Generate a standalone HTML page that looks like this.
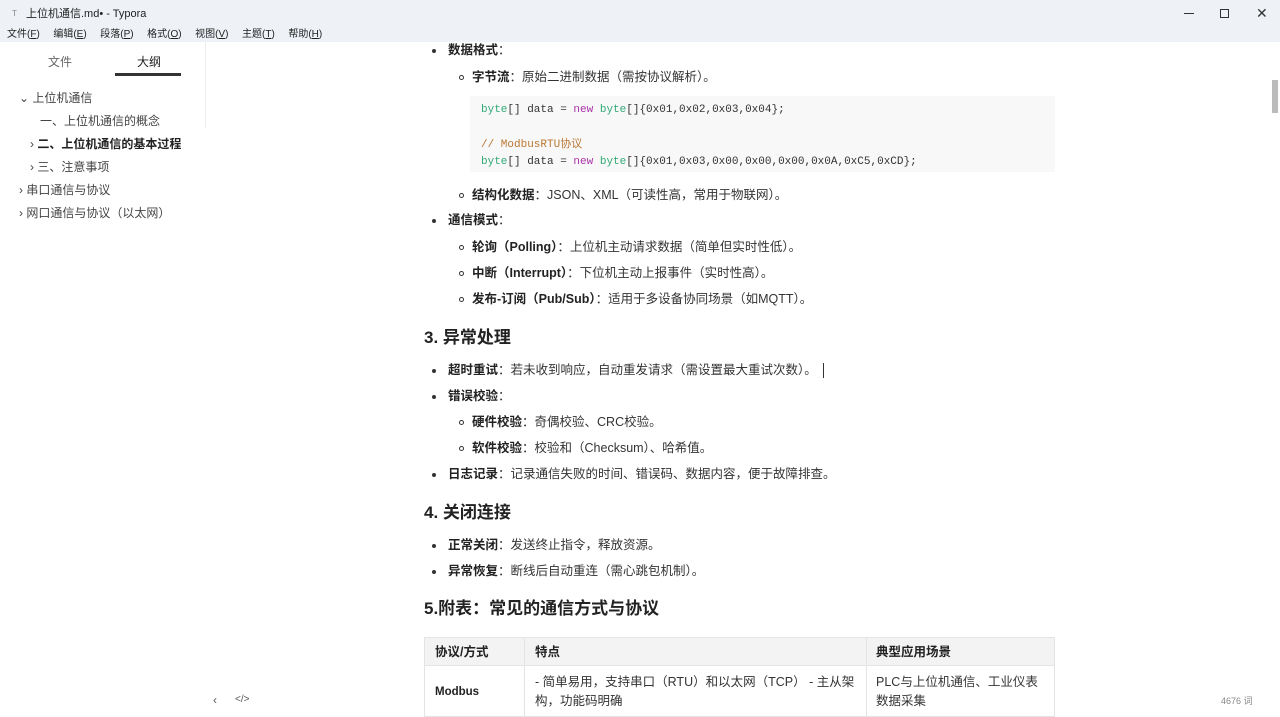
<!DOCTYPE html>
<html><head><meta charset="utf-8"><style>
*{margin:0;padding:0;box-sizing:border-box}
body{width:1280px;height:716px;overflow:hidden;background:#fff;font-family:"Liberation Sans","Noto Sans CJK SC",sans-serif;color:#333;font-size:12.5px;position:relative}
.a{position:absolute;white-space:nowrap;line-height:18px}
b{font-weight:bold;color:#222}
.mono{font-family:"Liberation Mono","Noto Sans CJK SC",monospace;font-size:11px}
.dot{position:absolute;width:4px;height:4px;border-radius:50%;background:#333}
.circ{position:absolute;width:5px;height:5px;border-radius:50%;border:1px solid #333}
h3{position:absolute;font-size:17px;font-weight:bold;color:#222;white-space:nowrap;line-height:22px}
.side{font-size:12px;color:#444}
</style></head><body>
<div style="position:absolute;left:0;top:0;width:1280px;height:42px;background:#eef2f7"></div>
<div class="a" style="left:12px;top:5px;font-size:8px;color:#888">T</div>
<div class="a" style="left:26px;top:5px;font-size:11px;color:#222">上位机通信.md• - Typora</div>
<div class="a" style="left:7px;top:26px;font-size:10px;color:#222;word-spacing:4px">文件(<u>F</u>) &nbsp;编辑(<u>E</u>) &nbsp;段落(<u>P</u>) &nbsp;格式(<u>O</u>) &nbsp;视图(<u>V</u>) &nbsp;主题(<u>T</u>) &nbsp;帮助(<u>H</u>)</div>
<div style="position:absolute;left:1184px;top:13px;width:10px;height:1px;background:#333"></div>
<div style="position:absolute;left:1220px;top:9px;width:9px;height:9px;border:1px solid #333"></div>
<div class="a" style="left:1256px;top:4px;font-size:14px;color:#333">✕</div>

<div style="position:absolute;left:205px;top:42px;width:1px;height:86px;background:#eee"></div>
<div class="a side" style="left:48px;top:53px;color:#666">文件</div>
<div class="a side" style="left:137px;top:53px;color:#222">大纲</div>
<div style="position:absolute;left:115px;top:73px;width:66px;height:3px;background:#333"></div>
<div class="a side" style="left:19px;top:89px">⌄ 上位机通信</div>
<div class="a side" style="left:40px;top:112px">一、上位机通信的概念</div>
<div class="a side" style="left:30px;top:135px">› <b>二、上位机通信的基本过程</b></div>
<div class="a side" style="left:30px;top:158px">› 三、注意事项</div>
<div class="a side" style="left:19px;top:181px">› 串口通信与协议</div>
<div class="a side" style="left:19px;top:204px">› 网口通信与协议（以太网）</div>

<div style="position:absolute;left:1272px;top:80px;width:6px;height:33px;background:#bbb"></div>

<div class="dot" style="left:432px;top:49px"></div><div class="a" style="left:448px;top:41px"><b>数据格式</b>：</div>
<div class="circ" style="left:459px;top:75px"></div><div class="a" style="left:472px;top:68px"><b>字节流</b>：原始二进制数据（需按协议解析）。</div>
<div style="position:absolute;left:470px;top:96px;width:585px;height:76px;background:#f8f8f8"></div>
<div class="a mono" style="left:481px;top:101px"><span style="color:#3a7">byte</span>[] data = <span style="color:#a3a">new</span> <span style="color:#3a7">byte</span>[]{0x01,0x02,0x03,0x04};</div>
<div class="a mono" style="left:481px;top:136px;color:#b73">// ModbusRTU协议</div>
<div class="a mono" style="left:481px;top:153px"><span style="color:#3a7">byte</span>[] data = <span style="color:#a3a">new</span> <span style="color:#3a7">byte</span>[]{0x01,0x03,0x00,0x00,0x00,0x0A,0xC5,0xCD};</div>
<div class="circ" style="left:459px;top:193px"></div><div class="a" style="left:472px;top:186px"><b>结构化数据</b>：JSON、XML（可读性高，常用于物联网）。</div>
<div class="dot" style="left:432px;top:219px"></div><div class="a" style="left:448px;top:211px"><b>通信模式</b>：</div>
<div class="circ" style="left:459px;top:245px"></div><div class="a" style="left:472px;top:238px"><b>轮询（Polling）</b>：上位机主动请求数据（简单但实时性低）。</div>
<div class="circ" style="left:459px;top:271px"></div><div class="a" style="left:472px;top:264px"><b>中断（Interrupt）</b>：下位机主动上报事件（实时性高）。</div>
<div class="circ" style="left:459px;top:297px"></div><div class="a" style="left:472px;top:290px"><b>发布-订阅（Pub/Sub）</b>：适用于多设备协同场景（如MQTT）。</div>
<h3 style="left:424px;top:327px">3. 异常处理</h3>
<div class="dot" style="left:432px;top:369px"></div><div class="a" style="left:448px;top:361px"><b>超时重试</b>：若未收到响应，自动重发请求（需设置最大重试次数）。<span style="display:inline-block;width:1px;height:15px;background:#333;vertical-align:middle;margin-left:6px"></span></div>
<div class="dot" style="left:432px;top:395px"></div><div class="a" style="left:448px;top:387px"><b>错误校验</b>：</div>
<div class="circ" style="left:459px;top:420px"></div><div class="a" style="left:472px;top:413px"><b>硬件校验</b>：奇偶校验、CRC校验。</div>
<div class="circ" style="left:459px;top:446px"></div><div class="a" style="left:472px;top:439px"><b>软件校验</b>：校验和（Checksum）、哈希值。</div>
<div class="dot" style="left:432px;top:473px"></div><div class="a" style="left:448px;top:465px"><b>日志记录</b>：记录通信失败的时间、错误码、数据内容，便于故障排查。</div>
<h3 style="left:424px;top:502px">4. 关闭连接</h3>
<div class="dot" style="left:432px;top:544px"></div><div class="a" style="left:448px;top:536px"><b>正常关闭</b>：发送终止指令，释放资源。</div>
<div class="dot" style="left:432px;top:570px"></div><div class="a" style="left:448px;top:562px"><b>异常恢复</b>：断线后自动重连（需心跳包机制）。</div>
<h3 style="left:424px;top:598px">5.附表：常见的通信方式与协议</h3>

<div style="position:absolute;left:424px;top:637px;width:631px;height:80px;border:1px solid #e4e4e4"></div>
<div style="position:absolute;left:425px;top:638px;width:629px;height:28px;background:#f3f3f3;border-bottom:1px solid #e4e4e4"></div>
<div style="position:absolute;left:524px;top:637px;width:1px;height:80px;background:#e4e4e4"></div>
<div style="position:absolute;left:866px;top:637px;width:1px;height:80px;background:#e4e4e4"></div>
<div class="a" style="left:435px;top:643px"><b>协议/方式</b></div>
<div class="a" style="left:535px;top:643px"><b>特点</b></div>
<div class="a" style="left:876px;top:643px"><b>典型应用场景</b></div>
<div class="a" style="left:435px;top:683px;font-size:11.5px"><b>Modbus</b></div>
<div class="a" style="left:535px;top:673px">- 简单易用，支持串口（RTU）和以太网（TCP） - 主从架</div>
<div class="a" style="left:535px;top:692px">构，功能码明确</div>
<div class="a" style="left:876px;top:673px">PLC与上位机通信、工业仪表</div>
<div class="a" style="left:876px;top:692px">数据采集</div>

<div class="a" style="left:213px;top:691px;font-size:12px;color:#555">‹</div>
<div class="a" style="left:235px;top:691px;font-size:10px;color:#555">&lt;/&gt;</div>
<div class="a" style="left:1221px;top:692px;font-size:9px;color:#888">4676 词</div>
</body></html>
